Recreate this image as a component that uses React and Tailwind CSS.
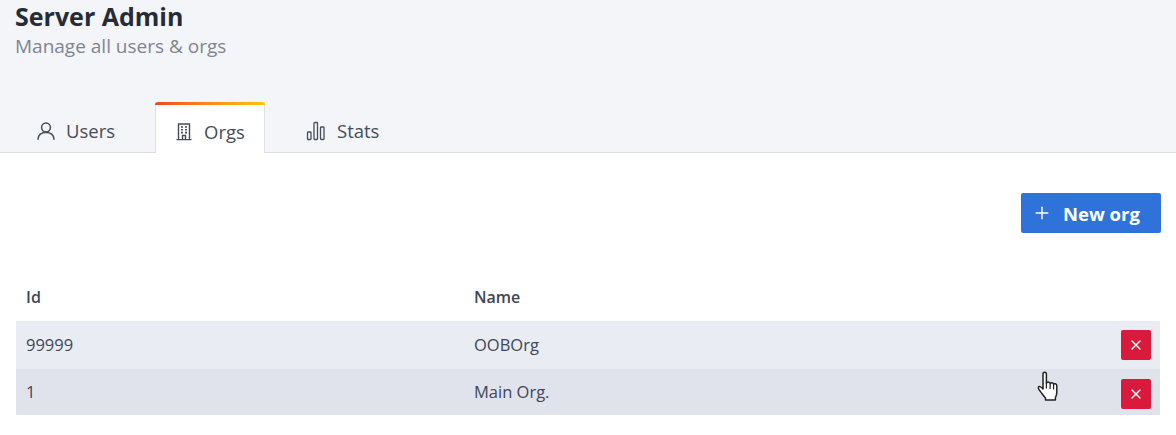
import React from 'react';
import { Plus, X } from 'lucide-react';

const UserIcon = () => (
  <svg width="18" height="18" viewBox="0 0 18 18" fill="none" stroke="currentColor" strokeWidth="1.5" strokeLinecap="round">
    <circle cx="9" cy="5.5" r="4.4" />
    <path d="M1 17.2c.4-4 3.4-6.6 8-6.6s7.6 2.6 8 6.6" />
  </svg>
);

const BuildingIcon = () => (
  <svg width="16" height="18" viewBox="0 0 16 18" fill="none" stroke="currentColor" strokeWidth="1.4">
    <path d="M2.5 16.5V1h11v15.5M0.5 16.6h15" />
    <path d="M6.5 16.5v-4h3v4" />
    <path d="M5 4h2M9 4h2M5 6.8h2M9 6.8h2M5 9.6h2M9 9.6h2" strokeWidth="1.6" />
  </svg>
);

const Bars = () => (
  <svg width="20" height="20" viewBox="0 0 20 20" fill="none" stroke="currentColor" strokeWidth="1.3">
    <rect x="1.5" y="11" width="3.5" height="7.5" rx="0.8" />
    <rect x="8" y="1.5" width="3.5" height="17" rx="0.8" />
    <rect x="14.5" y="6" width="3.5" height="12.5" rx="0.8" />
  </svg>
);

const HandCursor = () => (
  <svg width="24" height="32" viewBox="0 0 24 32" className="absolute left-[1036px] top-[371px]">
    <path
      d="M7 3c0-2.4 3.4-2.4 3.4 0v9.5c.4-2 3.6-1.8 3.7.3.5-1.7 3.4-1.5 3.5.6.8-1.2 3.2-.9 3.2 1.2v6.8c0 2.2-.6 3.6-1.4 5.2v2.4H9.5v-2c-1.6-1.6-3-3.8-5-6.4-1.2-1.6-2.6-3-2.2-4.2.5-1.4 2.6-1.2 4.7 1.6V3z"
      fill="#fff"
      stroke="#222"
      strokeWidth="1.5"
      strokeLinejoin="round"
    />
    <path d="M10.4 12.5v5M14.1 13v5M17.6 14v4.5" stroke="#222" strokeWidth="1.2" fill="none" />
  </svg>
);

const Tab = ({ icon, label, active, className }) => (
  <div
    className={
      'flex items-center pt-[8px] ' +
      (active
        ? 'h-[51px] -mb-px bg-white border-x border-[#dde1e8] relative ' + className
        : 'h-[50px] ' + className)
    }
  >
    {active && (
      <div className="absolute -left-px -right-px top-0 h-[3px] rounded-t-sm bg-gradient-to-r from-[#f0441f] to-[#fbc40c]" />
    )}
    {icon}
    <span className="text-[18.5px] leading-6">{label}</span>
  </div>
);

const Row = ({ id, name, className, btnClass }) => (
  <div className={'grid grid-cols-[448px_1fr_auto] items-center pl-[10px] pr-[9px] text-[16.5px] text-[#3f4654] ' + className}>
    <span>{id}</span>
    <span>{name}</span>
    <button className={'w-[30px] h-[30px] rounded-[2px] bg-[#d91a3c] text-white flex items-center justify-center ' + btnClass}>
      <X size={16} strokeWidth={2} />
    </button>
  </div>
);

export default function App() {
  return (
    <div className="relative w-[1176px] h-[435px] overflow-hidden bg-white font-['Open_Sans','Noto_Sans',sans-serif] text-[#3f4654]">
      <div className="h-[153px] bg-[#f3f5f9] border-b border-[#d9dde4] flex flex-col">
        <div className="pl-[15px] pt-[2px]">
          <h1 className="text-[25px] leading-[28px] font-bold text-[#272b35]">Server Admin</h1>
          <p className="mt-[3px] text-[19px] leading-[26px] text-[#7e8590]">Manage all users & orgs</p>
        </div>
        <div className="mt-auto flex text-[#464c59]">
          <Tab
            className="w-[155px] pl-[37px]"
            icon={<span className="mr-[11px] flex"><UserIcon /></span>}
            label="Users"
          />
          <Tab
            active
            className="w-[110px] pl-[20px]"
            icon={<span className="mr-[12px] flex"><BuildingIcon /></span>}
            label="Orgs"
          />
          <Tab
            className="pl-[41px]"
            icon={<span className="mr-[11px] flex"><Bars /></span>}
            label="Stats"
          />
        </div>
      </div>

      <div className="pl-[16px] pr-[16px]">
        <div className="flex justify-end pt-[40px]">
          <button className="w-[140px] h-[40px] -mr-px rounded-[2px] bg-[#2f73da] text-white flex items-center pl-[11px]">
            <Plus size={20} strokeWidth={1.8} className="mr-[11px]" />
            <span className="text-[18.5px] font-bold pt-px">New org</span>
          </button>
        </div>
        <div className="grid grid-cols-[448px_1fr] items-center pl-[10px] mt-[40px] h-[48px] text-[16px] font-semibold text-[#3f4654]">
          <span>Id</span>
          <span>Name</span>
        </div>
        <Row id="99999" name="OOBOrg" className="h-[48px] bg-[#e9ecf2]" />
        <Row id="1" name="Main Org." className="h-[46px] bg-[#e0e3ec]" btnClass="mt-[3px]" />
      </div>
      <HandCursor />
    </div>
  );
}
